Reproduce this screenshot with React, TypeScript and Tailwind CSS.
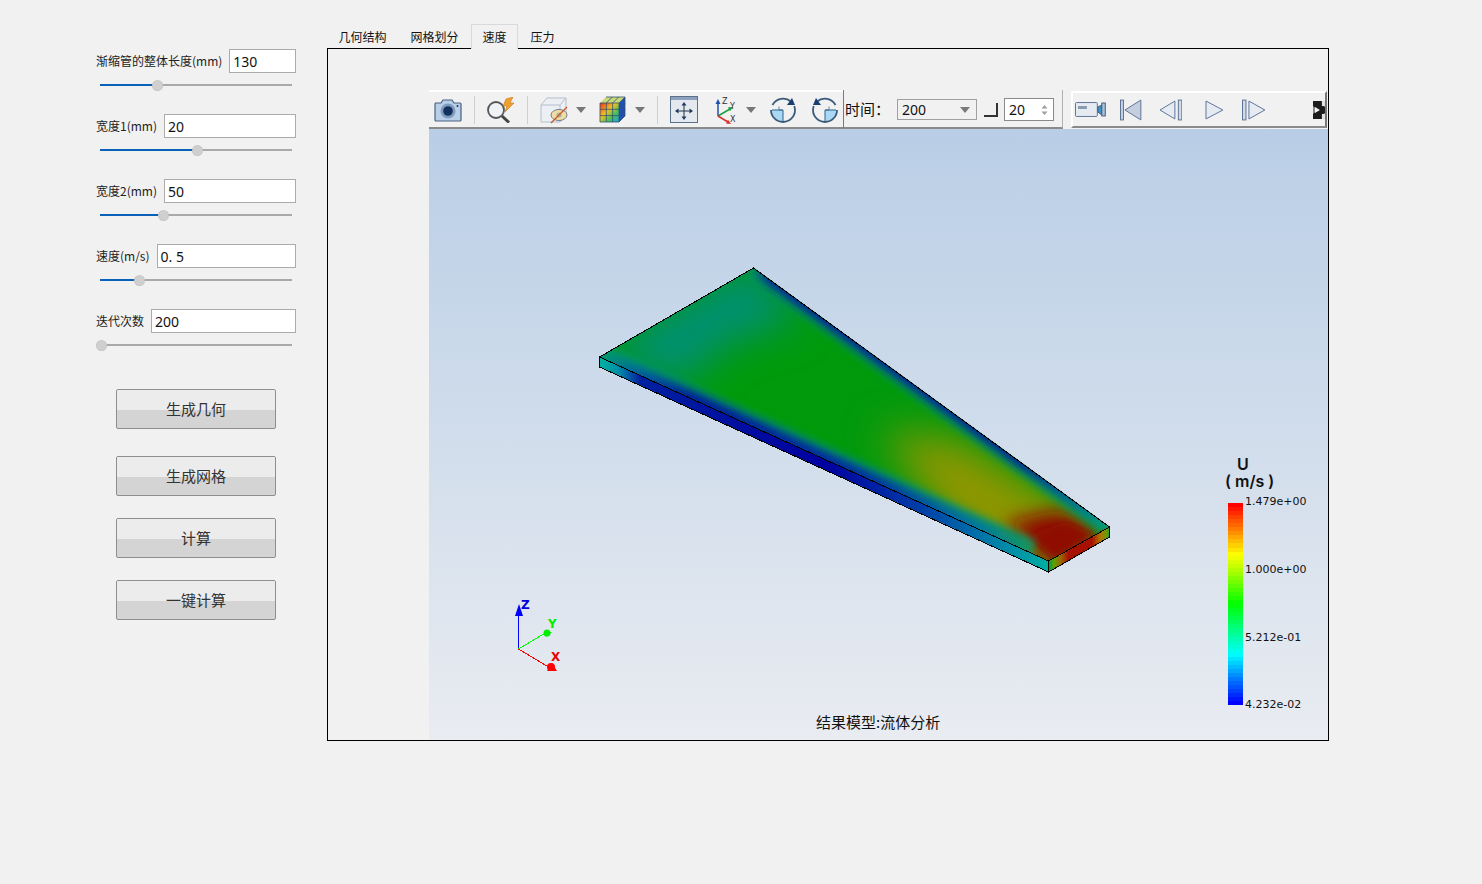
import React from "react";

const cjk = { fontFamily: '"Noto Sans CJK SC", sans-serif' };

function Slider({ at }: { at: number }) {
  return (
    <div className="relative mt-[11px] ml-[4px] h-[2px] w-[192px] bg-[#a9a9a9]">
      <div className="h-[2px] bg-[#0a62b8]" style={{ width: at }} />
      <div
        className="absolute top-[-4px] h-[11px] w-[11px] rounded-full border border-dotted border-[#bdbdbd] bg-[#cfcfcf]"
        style={{ left: at - 5 }}
      />
    </div>
  );
}

function Field({ label, value, at }: { label: string; value: string; at: number }) {
  return (
    <div className="h-[65px] w-[200px]">
      <div className="flex h-[24px] items-center">
        <span className="whitespace-nowrap text-[12px] leading-[24px] text-[#222] [font-family:'Noto_Sans_CJK_SC',sans-serif]">{label}</span>
        <div className="ml-[7px] flex h-[24px] min-w-0 flex-1 items-center whitespace-pre border border-[#ababab] bg-white pl-[3px] text-[14px] text-[#111] [font-family:'Noto_Sans',sans-serif]">
          {value}
        </div>
      </div>
      <Slider at={at} />
    </div>
  );
}

function Btn({ label, mt }: { label: string; mt: string }) {
  return (
    <button
      className={`relative ml-[20px] block h-[40px] w-[160px] overflow-hidden rounded-[2px] border border-[#8e8e8e] bg-[#d4d4d4] text-[15px] text-[#333] ${mt}`}
      style={cjk}
    >
      <span className="absolute left-0 right-0 top-0 h-[20px] bg-[#ececec]" />
      <span className="relative">{label}</span>
    </button>
  );
}

function Tab({ label, w, active }: { label: string; w: string; active?: boolean }) {
  return (
    <div
      className={`flex h-[25px] shrink-0 items-center justify-center text-[12px] text-[#111] ${w} ${active ? "border border-b-0 border-[#d9d9d9] bg-[#f1f1f1] z-10" : ""}`}
      style={cjk}
    >
      {label}
    </div>
  );
}

function Sep({ ml }: { ml: string }) {
  return <div className={`h-[28px] w-[1px] bg-[#cfcfcf] ${ml}`} />;
}

function Caret({ ml }: { ml: string }) {
  return (
    <svg width="10" height="6" viewBox="0 0 10 6" className={ml}>
      <path d="M0 0H10L5 6Z" fill="#777" />
    </svg>
  );
}

function Camera() {
  return (
    <svg width="28" height="24" viewBox="0 0 28 24" className="ml-[4px]">
      <path d="M1 5h6l2-3h9l2 3h6a1 1 0 0 1 1 1v16a1 1 0 0 1-1 1H2a1 1 0 0 1-1-1V6a1 1 0 0 1 1-1z" fill="#b9cfe8" stroke="#4a6080" strokeWidth="1.2" />
      <circle cx="14" cy="13" r="7.5" fill="#7f9cc0" />
      <circle cx="14" cy="13" r="4.8" fill="#16305e" />
      <circle cx="23.5" cy="8" r="1" fill="#1a3560" />
    </svg>
  );
}

function Magnifier() {
  return (
    <svg width="29" height="26" viewBox="0 0 29 26" className="ml-[12px]">
      <circle cx="9" cy="13" r="8" fill="#eef2f6" stroke="#555" strokeWidth="1.8" />
      <path d="M15 19l7 6.500" stroke="#444" strokeWidth="3" />
      <path d="M26 0l-7 2-3 7h4l-2 6 9-9h-4l3-6z" fill="#f0a030" stroke="#c87a10" strokeWidth=".6" />
    </svg>
  );
}

function CubeEye() {
  return (
    <svg width="28" height="28" viewBox="0 0 28 28" className="ml-[12px]">
      <path d="M1 9l6-7h19v18l-6 6H1z" fill="#eceff3" stroke="#b5bfcb" />
      <path d="M1 9h19v17M20 9l6-7" fill="none" stroke="#b5bfcb" />
      <ellipse cx="19" cy="19" rx="8" ry="5.5" fill="#f2dda0" stroke="#6f7f95" />
      <circle cx="19" cy="19" r="2.6" fill="#a9b4a0" />
      <path d="M11 27L27 11" stroke="#c9572c" strokeWidth="1.3" />
    </svg>
  );
}

function Rubik() {
  return (
    <svg width="27" height="27" viewBox="0 0 27 27" className="ml-[13px]">
      <path d="M20 7l6-6v19l-6 6z" fill="#1f4fb0" />
      <path d="M7 1h19l-6 6H1z" fill="#c8d878" />
      <defs>
        <linearGradient id="rb" x1="0" y1="0" x2="1" y2="1">
          <stop offset="0" stopColor="#e83020" />
          <stop offset=".4" stopColor="#f0c020" />
          <stop offset=".7" stopColor="#40c060" />
          <stop offset="1" stopColor="#20a0e0" />
        </linearGradient>
      </defs>
      <rect x="1" y="7" width="19" height="19" fill="url(#rb)" />
      <path d="M1 7h19v19H1zM7.300 7v19M13.600 7v19M1 13.300h19M1 19.600h19M7 1h19v19l-6 6M20 7l6-6M7.300 7l6-6M13.600 7l6-6M20 13.300l6-6M20 19.600l6-6" fill="none" stroke="#33506f" strokeWidth=".8" />
    </svg>
  );
}

function Pan() {
  return (
    <svg width="28" height="27" viewBox="0 0 28 27" className="ml-[12px]">
      <rect x=".5" y=".5" width="27" height="26" fill="#e4e9f0" stroke="#5c708c" />
      <rect x="1" y="1" width="26" height="3" fill="#8ea2bd" />
      <path d="M14 8v14M7 15h14" stroke="#234" strokeWidth="1" />
      <path d="M14 6l-2.500 3.500h5zM14 24l-2.500-3.500h5zM5 15l3.500-2.500v5zM23 15l-3.500-2.500v5z" fill="#1d3b5f" />
    </svg>
  );
}

function Axes() {
  return (
    <svg width="25" height="28" viewBox="0 0 25 28" className="ml-[15px]">
      <path d="M5 20V6" stroke="#2050b0" strokeWidth="1.5" />
      <path d="M5 3l-2.500 5h5z" fill="#2050b0" />
      <path d="M5 20l12-7" stroke="#18a040" strokeWidth="1.5" />
      <path d="M20 11l-5 .3 2 4z" fill="#18a040" />
      <path d="M5 20l10 6" stroke="#d83030" strokeWidth="1.5" />
      <path d="M18 28l-5-.6 2-3.600z" fill="#d83030" />
      <path d="M5 20h.1" stroke="#222" strokeWidth="2" />
      <text x="9" y="8" fontSize="8" fill="#333" fontFamily="DejaVu Sans">Z</text>
      <text x="17" y="13" fontSize="8" fill="#333" fontFamily="DejaVu Sans">Y</text>
      <text x="17" y="26" fontSize="8" fill="#333" fontFamily="DejaVu Sans">X</text>
    </svg>
  );
}

function Rot({ flip, ml }: { flip?: boolean; ml: string }) {
  return (
    <svg width="26" height="26" viewBox="0 0 26 26" className={ml} style={flip ? { transform: "scaleX(-1)" } : undefined}>
      <path d="M13 13V24A11 11 0 0 1 2 13z" fill="#a9d8f5" stroke="none" />
      <path d="M2 13h11v11" fill="none" stroke="#31608a" strokeWidth="1" />
      <path d="M9 9.500v3.500h3.500" fill="none" stroke="#31608a" strokeWidth=".7" />
      <path d="M21 4.500A12 12 0 0 0 2.500 8M1 13a12 12 0 0 0 24 0 12 12 0 0 0-.8-4" fill="none" stroke="#3a5a7c" strokeWidth="1.8" />
      <path d="M25 8L17 8l5-7z" fill="#17406e" />
    </svg>
  );
}

const navStroke = "#5f7597";

function CamCorder() {
  return (
    <svg width="31" height="17" viewBox="0 0 31 17" className="ml-[2px]">
      <rect x=".5" y="1.500" width="22" height="14" rx="1" fill="#e6ebf2" stroke={navStroke} />
      <rect x="3" y="5" width="9" height="3" fill="#8a9cb5" />
      <path d="M23 6l4-2v10l-4-3z" fill="#3f93c9" stroke="#445c7c" />
      <rect x="27" y="2" width="3.500" height="13" fill="#aac3da" stroke="#445c7c" />
    </svg>
  );
}

function First() {
  return (
    <svg width="22" height="22" viewBox="0 0 22 22" className="ml-[14px]">
      <rect x=".5" y="1" width="3" height="20" fill="#c4d0e0" stroke={navStroke} />
      <path d="M21 1v20L5 11z" fill="#c3cfdf" stroke={navStroke} />
    </svg>
  );
}

function Prev() {
  return (
    <svg width="24" height="22" viewBox="0 0 24 22" className="ml-[17px]">
      <path d="M16 2v18L1 11z" fill="#e6ebf3" stroke={navStroke} />
      <rect x="19.500" y="1" width="3.500" height="20" fill="#d0dae6" stroke={navStroke} />
    </svg>
  );
}

function Play() {
  return (
    <svg width="19" height="22" viewBox="0 0 19 22" className="ml-[23px]">
      <path d="M1 2v18l17-9z" fill="#e6ebf3" stroke={navStroke} />
    </svg>
  );
}

function Next() {
  return (
    <svg width="24" height="22" viewBox="0 0 24 22" className="ml-[18px]">
      <rect x=".5" y="1" width="3.500" height="20" fill="#d0dae6" stroke={navStroke} />
      <path d="M7 2v18l16-9z" fill="#e6ebf3" stroke={navStroke} />
    </svg>
  );
}

function Grip() {
  return (
    <svg width="12" height="18" viewBox="0 0 12 18" className="ml-[47px]">
      <defs>
        <filter id="gb"><feGaussianBlur stdDeviation=".6" /></filter>
      </defs>
      <g filter="url(#gb)">
        <rect x="0" y="0" width="12" height="18" fill="#8a8a8a" />
        <path d="M0 0h9v4l3 2v6l-3 2v4H0V13l5-4-5-4z" fill="#1a1a1a" />
        <path d="M2 6l5 3-5 3z" fill="#f4f4f4" />
        <rect x="9" y="0" width="3" height="5" fill="#e4e4e4" />
        <rect x="9" y="13" width="3" height="5" fill="#e4e4e4" />
      </g>
    </svg>
  );
}

function Toolbar() {
  return (
    <div className="flex h-[39px] w-[899px] shrink-0 bg-[#f1f1f1]">
      <div className="flex h-[39px] w-[414px] shrink-0 items-center border-b-2 border-t-2 border-b-[#8a8a8a] border-t-white pl-[1px]">
        <Camera />
        <Sep ml="ml-[12px]" />
        <Magnifier />
        <Sep ml="ml-[11px]" />
        <CubeEye />
        <Caret ml="ml-[8px]" />
        <Rubik />
        <Caret ml="ml-[9px]" />
        <Sep ml="ml-[12px]" />
        <Pan />
        <Axes />
        <Caret ml="ml-[8px]" />
        <Rot ml="ml-[14px]" />
        <Rot flip ml="ml-[16px]" />
      </div>
      <div className="flex h-[39px] w-[220px] shrink-0 items-center border-b-2 border-l border-r border-b-[#8a8a8a] border-l-[#7a7a7a] border-r-[#b0b0b0] pl-[1px] pt-[2px] text-[13px] text-[#111]">
        <span className="w-[52px] whitespace-nowrap text-[15px]" style={cjk}>时间：</span>
        <div className="flex h-[21px] w-[80px] items-center justify-between border border-[#a0a0a0] pl-[4px] pr-[6px] text-[14px] [font-family:'Noto_Sans',sans-serif]">
          200
          <svg width="10" height="6" viewBox="0 0 10 6"><path d="M0 0H10L5 6Z" fill="#7a7a7a" /></svg>
        </div>
        <div className="ml-[7px] h-[14px] w-[14px] border-b-2 border-r-2 border-b-[#333] border-r-[#333]" />
        <div className="ml-[6px] flex h-[23px] w-[50px] items-center justify-between border border-[#8a8a8a] bg-white pl-[4px] pr-[5px] text-[14px] [font-family:'Noto_Sans',sans-serif]">
          20
          <svg width="7" height="12" viewBox="0 0 7 12"><path d="M3.500 1L6.500 4.500H.5ZM3.500 11L6.500 7.500H.5Z" fill="#a0a0a0" /></svg>
        </div>
      </div>
      <div className="ml-[8px] mt-[1px] flex h-[37px] w-[256px] shrink-0 items-center border-b-2 border-l-2 border-r-2 border-t-2 border-b-[#8a8a8a] border-l-white border-r-[#777] border-t-white">
        <CamCorder />
        <First />
        <Prev />
        <Play />
        <Next />
        <Grip />
      </div>
    </div>
  );
}

function Model() {
  return (
    <svg width="899" height="611" viewBox="429 129 899 611" className="absolute left-0 top-0">
      <defs>
        <clipPath id="top"><path d="M600 357L754 268L1110 527L1049 561Z" /></clipPath>
        <filter id="b4" x="-30%" y="-30%" width="160%" height="160%"><feGaussianBlur stdDeviation="4" /></filter>
        <filter id="b9" x="-30%" y="-30%" width="160%" height="160%"><feGaussianBlur stdDeviation="9" /></filter>
        <filter id="b20" x="-30%" y="-30%" width="160%" height="160%"><feGaussianBlur stdDeviation="20" /></filter>
        <linearGradient id="upperEdge" gradientUnits="userSpaceOnUse" x1="754" y1="268" x2="1110" y2="527">
          <stop offset="0" stopColor="#008a60" />
          <stop offset=".04" stopColor="#001a98" />
          <stop offset=".75" stopColor="#001a98" />
          <stop offset=".92" stopColor="#0070a0" />
          <stop offset="1" stopColor="#00a088" />
        </linearGradient>
        <linearGradient id="lowerEdge" gradientUnits="userSpaceOnUse" x1="600" y1="357" x2="1049" y2="561">
          <stop offset="0" stopColor="#009a70" />
          <stop offset=".08" stopColor="#0060a0" />
          <stop offset=".2" stopColor="#001a98" />
          <stop offset=".6" stopColor="#0030a0" />
          <stop offset=".85" stopColor="#0078a0" />
          <stop offset="1" stopColor="#20a040" />
        </linearGradient>
        <linearGradient id="longSide" gradientUnits="userSpaceOnUse" x1="600" y1="0" x2="1049" y2="0">
          <stop offset="0" stopColor="#00b0a0" />
          <stop offset=".04" stopColor="#0090a8" />
          <stop offset=".09" stopColor="#0020a0" />
          <stop offset=".5" stopColor="#0000a0" />
          <stop offset=".72" stopColor="#0040a8" />
          <stop offset=".9" stopColor="#0088a8" />
          <stop offset="1" stopColor="#00b0a0" />
        </linearGradient>
        <linearGradient id="shortSide" gradientUnits="userSpaceOnUse" x1="1049" y1="0" x2="1110" y2="0">
          <stop offset="0" stopColor="#009a40" />
          <stop offset=".08" stopColor="#60a000" />
          <stop offset=".2" stopColor="#a06000" />
          <stop offset=".32" stopColor="#a81000" />
          <stop offset=".7" stopColor="#a81000" />
          <stop offset=".85" stopColor="#b07800" />
          <stop offset=".95" stopColor="#60a000" />
          <stop offset="1" stopColor="#00a060" />
        </linearGradient>
      </defs>
      <g clipPath="url(#top)">
        <rect x="590" y="260" width="530" height="310" fill="#009a0c" />
        <path d="M600 350L754 262L800 320L730 340L680 385Z" fill="#008f74" filter="url(#b20)" />
        <path d="M880 430L960 440L1060 500L1110 540L1040 575L950 530Z" fill="#8f9600" filter="url(#b20)" />
        <path d="M1005 522L1058 510L1100 532L1055 566Z" fill="#8e1000" filter="url(#b9)" />
        <path d="M1030 535L1065 522L1095 535L1055 560Z" fill="#8e1000" filter="url(#b4)" />
        <path d="M754 268L1110 527" stroke="#009a60" strokeWidth="20" filter="url(#b4)" fill="none" opacity=".9" />
        <path d="M600 357L1030 552" stroke="#009a70" strokeWidth="24" filter="url(#b4)" fill="none" opacity=".9" />
        <path d="M754 268L1110 527" stroke="url(#upperEdge)" strokeWidth="10" filter="url(#b4)" fill="none" />
        <path d="M600 357L1030 552" stroke="url(#lowerEdge)" strokeWidth="15" filter="url(#b4)" fill="none" />
      </g>
      <path d="M600 357L1049 561V572L600 367Z" fill="url(#longSide)" />
      <path d="M1049 561L1110 527V537L1049 572Z" fill="url(#shortSide)" />
      <g transform="translate(-0.5 0)">
        <g fill="none" stroke="#000" strokeWidth="1" shapeRendering="crispEdges">
          <path d="M600 357L754 268L1110 527V537L1049 572L600 367Z" />
          <path d="M600 357L1049 561L1110 527M1049 561V572" />
        </g>
        <g shapeRendering="crispEdges" strokeWidth="1" fill="none">
          <path d="M519 649V611" stroke="#0000ff" />
          <path d="M519 649L544 634" stroke="#00ff00" />
          <path d="M519 649L549 667" stroke="#ff0000" />
        </g>
      </g>
      <path d="M519 604L515 616H523Z" fill="#0000ff" />
      <circle cx="547" cy="633" r="3.500" fill="#00ee00" />
      <path d="M544 632L552 632L546 637Z" fill="#00ee00" />
      <circle cx="551" cy="667" r="4" fill="#ff0000" />
      <path d="M552 663L557 671L547 671Z" fill="#ff0000" />
    </svg>
  );
}

const steps = Array.from({ length: 50 }, (_, i) => `hsl(${Math.round((i / 49) * 240)} 100% 50%)`);

function Legend() {
  const labels: [string, string][] = [
    ["1.479e+00", "top-[365px]"],
    ["1.000e+00", "top-[433px]"],
    ["5.212e-01", "top-[501px]"],
    ["4.232e-02", "top-[568px]"],
  ];
  return (
    <>
      <div className="absolute left-[796px] top-[327px] whitespace-pre text-[16px] font-semibold leading-[17px] text-[#111] [font-family:'Inter',sans-serif]">
        {"   U\n( m/s )"}
      </div>
      <div className="absolute left-[799px] top-[374px] flex h-[202px] w-[15px] flex-col">
        {steps.map((c, i) => (
          <div key={i} className="flex-1" style={{ background: c }} />
        ))}
      </div>
      {labels.map(([t, p]) => (
        <div key={t} className={`absolute left-[816px] text-[11px] leading-[16px] text-[#111] [font-family:'DejaVu_Sans',sans-serif] ${p}`}>{t}</div>
      ))}
    </>
  );
}

export default function App() {
  return (
    <div className="flex h-[884px] w-[1482px] overflow-hidden bg-[#f1f1f1]">
      <div className="w-[327px] shrink-0 pl-[96px] pt-[49px]">
        <Field label="渐缩管的整体长度(mm)" value="130" at={57} />
        <Field label="宽度1(mm)" value="20" at={97} />
        <Field label="宽度2(mm)" value="50" at={63} />
        <Field label="速度(m/s)" value="0. 5" at={39} />
        <Field label="迭代次数" value="200" at={1} />
        <Btn label="生成几何" mt="mt-[15px]" />
        <Btn label="生成网格" mt="mt-[27px]" />
        <Btn label="计算" mt="mt-[22px]" />
        <Btn label="一键计算" mt="mt-[22px]" />
      </div>
      <div className="w-[1002px] shrink-0 pt-[24px]">
        <div className="relative z-10 flex h-[24px]">
          <Tab label="几何结构" w="w-[71px]" />
          <Tab label="网格划分" w="w-[73px]" />
          <Tab label="速度" w="w-[47px]" active />
          <Tab label="压力" w="w-[49px]" />
        </div>
        <div className="flex h-[693px] flex-col border border-black pl-[101px] pt-[41px]">
          <Toolbar />
          <div className="relative flex-1 bg-linear-to-b from-[#b9cee6] to-[#e9ecf1]">
            <Model />
            <div className="absolute left-[92px] top-[470px] text-[12px] font-bold leading-[12px] text-[#0000dd] [font-family:'DejaVu_Sans',sans-serif]">Z</div>
            <div className="absolute left-[119px] top-[488px] text-[12px] font-bold leading-[14px] text-[#00ee00] [font-family:'DejaVu_Sans',sans-serif]">Y</div>
            <div className="absolute left-[122px] top-[521px] text-[12px] font-bold leading-[14px] text-[#ee0000] [font-family:'DejaVu_Sans',sans-serif]">X</div>
            <Legend />
            <div className="absolute bottom-[8px] left-[387px] whitespace-nowrap text-[15px] leading-[20px] text-[#111]" style={cjk}>结果模型:流体分析</div>
          </div>
        </div>
      </div>
    </div>
  );
}
